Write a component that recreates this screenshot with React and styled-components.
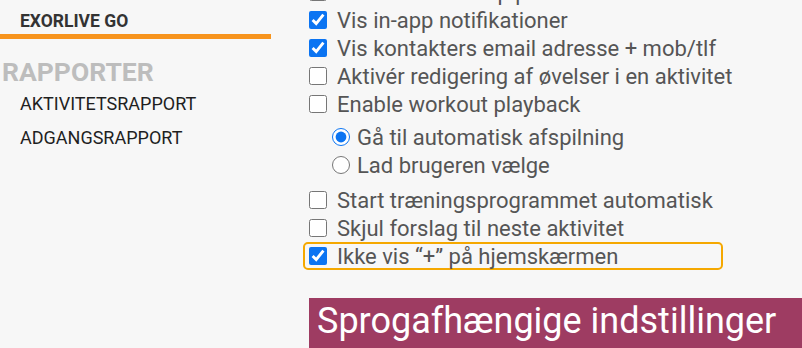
import React from 'react'
import styled, { createGlobalStyle } from 'styled-components'

const GlobalStyle = createGlobalStyle`
  html, body {
    margin: 0;
    padding: 0;
    background: #f7f7f7;
    overflow: hidden;
    font-family: Roboto, 'Liberation Sans', sans-serif;
  }
`

const Page = styled.div`
  display: grid;
  grid-template-columns: 271px 1fr;
  column-gap: 32px;
  height: 348px;
  overflow: hidden;
`

const Sidebar = styled.nav`
  display: flex;
  flex-direction: column;
`

const Tab = styled.div`
  padding: 11px 0 3px 20px;
  border-bottom: 5px solid #f7941d;
  font-size: 17.5px;
  font-weight: 700;
  color: #333;
  line-height: 20px;
`

const SectionTitle = styled.h2`
  margin: 18px 0 0 2px;
  font-size: 26.5px;
  font-weight: 700;
  color: #bdbdbd;
  line-height: 30px;
`

const NavLink = styled.a`
  display: block;
  padding-left: 20px;
  font-size: 18px;
  font-weight: 400;
  color: #1f1f1f;
  line-height: 34px;
  text-decoration: none;
`

const Settings = styled.section`
  display: flex;
  flex-direction: column;
  align-items: flex-start;
  margin-top: -22px;
`

const Row = styled.label`
  box-sizing: border-box;
  display: flex;
  align-items: center;
  gap: ${p => (p.$radio ? '7px' : '10px')};
  width: 420px;
  height: 28px;
  padding: 0 4px;
  border: 2px solid ${p => (p.$focused ? '#f5a800' : 'transparent')};
  border-radius: 5px;
  font-size: 22px;
  color: #555;
  white-space: nowrap;
`

const Box = styled.input`
  width: 18px;
  height: 18px;
  margin: 0;
  flex: none;
  accent-color: #0b74f2;
`

const RadioGroup = styled.div`
  display: flex;
  flex-direction: column;
  padding: 5px 0 7px 23px;
`

const Banner = styled.h2`
  box-sizing: border-box;
  align-self: stretch;
  margin: 28px 0 0 6px;
  padding: 2px 8px 10px;
  background: #9e3c62;
  color: #fff;
  font-size: 36px;
  font-weight: 400;
  line-height: 42px;
  white-space: nowrap;
`

const Check = ({ label, checked, focused }) => (
  <Row $focused={focused}>
    <Box type='checkbox' defaultChecked={checked} />
    <span>{label}</span>
  </Row>
)

const Radio = ({ label, checked }) => (
  <Row $radio>
    <Box type='radio' name='playback' defaultChecked={checked} />
    <span>{label}</span>
  </Row>
)

export default function App() {
  return (
    <>
      <GlobalStyle />
      <Page>
        <Sidebar>
          <Tab>EXORLIVE GO</Tab>
          <SectionTitle>RAPPORTER</SectionTitle>
          <NavLink>AKTIVITETSRAPPORT</NavLink>
          <NavLink>ADGANGSRAPPORT</NavLink>
        </Sidebar>
        <Settings>
          <Check label='Vis aktivitetsknap på forsiden' />
          <Check label='Vis in-app notifikationer' checked />
          <Check label='Vis kontakters email adresse + mob/tlf' checked />
          <Check label='Aktivér redigering af øvelser i en aktivitet' />
          <Check label='Enable workout playback' />
          <RadioGroup>
            <Radio label='Gå til automatisk afspilning' checked />
            <Radio label='Lad brugeren vælge' />
          </RadioGroup>
          <Check label='Start træningsprogrammet automatisk' />
          <Check label='Skjul forslag til neste aktivitet' />
          <Check label='Ikke vis “+” på hjemskærmen' checked focused />
          <Banner>Sprogafhængige indstillinger</Banner>
        </Settings>
      </Page>
    </>
  )
}
